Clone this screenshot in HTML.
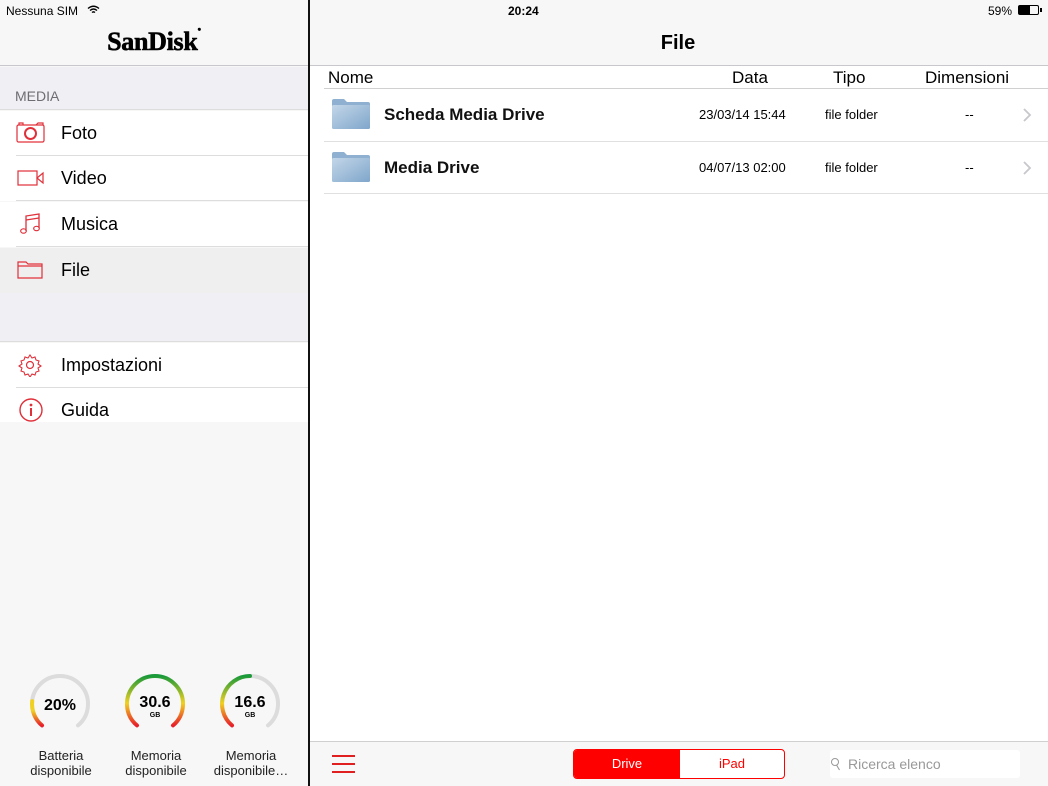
<!DOCTYPE html>
<html><head><meta charset="utf-8"><style>
*{margin:0;padding:0;box-sizing:border-box}
body{width:1048px;height:786px;overflow:hidden;font-family:"Liberation Sans",sans-serif;background:#fff;position:relative;color:#000}
.a{position:absolute}
.side{left:0;top:0;width:308px;height:786px;background:#f7f7f7}
.vline{left:308px;top:0;width:2px;height:786px;background:#111}
.row{position:absolute;left:0;width:308px;height:45px;background:#fff;font-size:18px}
.row span{position:absolute;left:61px;top:12px}
.row .sep{position:absolute;left:16px;right:0;bottom:0;height:1px;background:#ddd}
.row svg{position:absolute;left:16px;top:10px}
.t{font-size:13px;text-align:center;line-height:15px;color:#222}
</style></head><body>
<div class="a side"></div>
<div class="a" style="left:0;top:0;width:308px;height:66px;background:#f7f7f7;border-bottom:1px solid #c8c8cc"></div>
<div class="a" style="left:6px;top:4px;font-size:12px">Nessuna SIM</div>
<svg class="a" style="left:87px;top:5px" width="13" height="10" viewBox="0 0 13 10"><path d="M1 3.5Q6.5-1 12 3.5M3 5.5Q6.5 2.5 10 5.5M5 7.5Q6.5 6.2 8 7.5" stroke="#000" stroke-width="1.4" fill="none"/></svg>
<div class="a" style="left:0;width:308px;top:27px;text-align:center;font-family:'Liberation Serif',serif;font-weight:bold;font-size:26px;letter-spacing:-0.3px;-webkit-text-stroke:0.6px #000">SanDisk<span style="font-size:6px;vertical-align:top">●</span></div>
<div class="a" style="left:0;top:67px;width:308px;height:43px;background:#efeff4;border-bottom:1px solid #ddd"></div>
<div class="a" style="left:15px;top:88px;font-size:14px;color:#6d6d72">MEDIA</div>
<div class="row" style="top:111px"><svg width="30" height="24" viewBox="0 0 30 24"><rect x="1" y="4" width="27" height="17" rx="1.5" fill="none" stroke="#e0303a" stroke-width="1.2"/><path d="M3 4V2h4v2M20 4l2-2h5v2" fill="none" stroke="#e0303a" stroke-width="1.2"/><circle cx="14.5" cy="12.5" r="5.5" fill="none" stroke="#e0303a" stroke-width="2"/></svg><span>Foto</span><div class="sep"></div></div>
<div class="row" style="top:156px"><svg width="30" height="24" viewBox="0 0 30 24"><rect x="2" y="5" width="19" height="14" fill="none" stroke="#e0303a" stroke-width="1.2"/><path d="M21 12l6-5v10z" fill="none" stroke="#e0303a" stroke-width="1.2"/></svg><span>Video</span><div class="sep"></div></div>
<div class="row" style="top:202px"><svg width="30" height="24" viewBox="0 0 30 24"><path d="M10 19V4l13-2v14" fill="none" stroke="#e0303a" stroke-width="1.3"/><path d="M10 8l13-2" stroke="#e0303a" stroke-width="1.3"/><ellipse cx="7.5" cy="19" rx="2.8" ry="2.2" fill="none" stroke="#e0303a" stroke-width="1.2"/><ellipse cx="20.5" cy="16.5" rx="2.8" ry="2.2" fill="none" stroke="#e0303a" stroke-width="1.2"/></svg><span>Musica</span><div class="sep"></div></div>
<div class="row" style="top:248px;background:#efefef"><svg width="30" height="24" viewBox="0 0 30 24"><path d="M2 4h8l2 2h14v14H2z M2 8h24" fill="none" stroke="#e0303a" stroke-width="1.2"/></svg><span>File</span></div>
<div class="a" style="left:0;top:293px;width:308px;height:49px;background:#efeff4;border-bottom:1px solid #ddd"></div>
<div class="row" style="top:343px"><svg width="30" height="24" viewBox="0 0 30 24"><circle cx="14" cy="12" r="3.5" fill="none" stroke="#e0303a" stroke-width="1.2"/><path d="M14 2l2 3 3-1 1 3 3 1-1 3 3 2-3 2 1 3-3 1-1 3-3-1-2 3-2-3-3 1-1-3-3-1 1-3-3-2 3-2-1-3 3-1 1-3 3 1z" fill="none" stroke="#e0303a" stroke-width="1.1"/></svg><span>Impostazioni</span><div class="sep"></div></div>
<div class="row" style="top:388px;height:34px"><svg width="30" height="24" viewBox="0 0 30 24"><circle cx="15" cy="12" r="11" fill="none" stroke="#e0303a" stroke-width="1.4"/><circle cx="15" cy="7" r="1.4" fill="#e0303a"/><path d="M15 10v8" stroke="#e0303a" stroke-width="2"/></svg><span>Guida</span></div>

<svg class="a" style="left:0;top:660px" width="308" height="90">
<defs><linearGradient id="g" x1="0" y1="1" x2="0" y2="0"><stop offset="0" stop-color="#e8202a"/><stop offset="0.45" stop-color="#f0d020"/><stop offset="1" stop-color="#1a9a3a"/></linearGradient>
<linearGradient id="g2" x1="0" y1="1" x2="0" y2="0"><stop offset="0" stop-color="#e8202a"/><stop offset="0.6" stop-color="#f0d020"/><stop offset="1" stop-color="#f0d020"/></linearGradient></defs>
<g fill="none" stroke-width="4" stroke-linecap="round">
<path d="M42 65.4A28 28 0 1 1 78 65.4" stroke="#dcdcdc"/>
<path d="M42 65.4A28 28 0 0 1 32.2 41.1" stroke="url(#g2)"/>
<path d="M137 65.4A28 28 0 1 1 173 65.4" stroke="url(#g)"/>
<path d="M232 65.4A28 28 0 1 1 268 65.4" stroke="#dcdcdc"/>
<path d="M232 65.4A28 28 0 0 1 250 16" stroke="url(#g)"/>
</g>
<text x="60" y="50" font-size="16" font-weight="bold" text-anchor="middle" font-family="Liberation Sans">20%</text>
<text x="155" y="47" font-size="16" font-weight="bold" text-anchor="middle" font-family="Liberation Sans">30.6</text>
<text x="155" y="57" font-size="7" font-weight="bold" text-anchor="middle" font-family="Liberation Sans">GB</text>
<text x="250" y="47" font-size="16" font-weight="bold" text-anchor="middle" font-family="Liberation Sans">16.6</text>
<text x="250" y="57" font-size="7" font-weight="bold" text-anchor="middle" font-family="Liberation Sans">GB</text>
</svg>
<div class="a t" style="left:20px;width:82px;top:748px">Batteria<br>disponibile</div>
<div class="a t" style="left:115px;width:82px;top:748px">Memoria<br>disponibile</div>
<div class="a t" style="left:205px;width:92px;top:748px">Memoria<br>disponibile…</div>
<div class="a vline"></div>

<div class="a" style="left:310px;top:0;width:738px;height:66px;background:#f7f7f7;border-bottom:1px solid #c8c8cc"></div>
<div class="a" style="left:508px;top:4px;font-size:12px;font-weight:bold">20:24</div>
<div class="a" style="left:988px;top:4px;font-size:12px">59%</div>
<div class="a" style="left:1018px;top:5px;width:21px;height:10px;border:1px solid #000;border-radius:2px"><div style="width:11px;height:8px;background:#000"></div></div>
<div class="a" style="left:1040px;top:8px;width:2px;height:4px;background:#000"></div>
<div class="a" style="left:310px;width:736px;top:32px;text-align:center;font-size:20px;font-weight:bold">File</div>
<div class="a" style="left:328px;top:68px;font-size:17px">Nome</div>
<div class="a" style="left:732px;top:68px;font-size:17px">Data</div>
<div class="a" style="left:833px;top:68px;font-size:17px">Tipo</div>
<div class="a" style="left:925px;top:68px;font-size:17px">Dimensioni</div>
<div class="a" style="left:324px;top:88px;width:724px;height:1px;background:#d0d0d0"></div>
<div class="a" style="left:324px;top:141px;width:724px;height:1px;background:#e0e0e0"></div>
<div class="a" style="left:324px;top:193px;width:724px;height:1px;background:#e0e0e0"></div>

<svg class="a" style="left:331px;top:98px" width="40" height="32" viewBox="0 0 40 32"><defs><linearGradient id="f" x1="0" y1="0" x2="1" y2="1"><stop offset="0" stop-color="#c3d6e8"/><stop offset="1" stop-color="#7fa6cb"/></linearGradient></defs><path d="M1 3q0-2 2-2h10l3 3h21q2 0 2 2v4H1z" fill="#8fb0d0"/><rect x="1" y="7" width="38" height="24" rx="1.5" fill="url(#f)"/></svg>
<svg class="a" style="left:331px;top:151px" width="40" height="32" viewBox="0 0 40 32"><path d="M1 3q0-2 2-2h10l3 3h21q2 0 2 2v4H1z" fill="#8fb0d0"/><rect x="1" y="7" width="38" height="24" rx="1.5" fill="url(#f)"/></svg>
<div class="a" style="left:384px;top:105px;font-size:17px;font-weight:bold;color:#111">Scheda Media Drive</div>
<div class="a" style="left:384px;top:158px;font-size:17px;font-weight:bold;color:#111">Media Drive</div>
<div class="a" style="left:699px;top:107px;font-size:13px">23/03/14 15:44</div>
<div class="a" style="left:699px;top:160px;font-size:13px">04/07/13 02:00</div>
<div class="a" style="left:825px;top:107px;font-size:13px">file folder</div>
<div class="a" style="left:825px;top:160px;font-size:13px">file folder</div>
<div class="a" style="left:965px;top:107px;font-size:13px">--</div>
<div class="a" style="left:965px;top:160px;font-size:13px">--</div>
<svg class="a" style="left:1022px;top:108px" width="10" height="14"><path d="M2 1l6 6-6 6" fill="none" stroke="#c7c7cc" stroke-width="1.8"/></svg>
<svg class="a" style="left:1022px;top:161px" width="10" height="14"><path d="M2 1l6 6-6 6" fill="none" stroke="#c7c7cc" stroke-width="1.8"/></svg>

<div class="a" style="left:310px;top:741px;width:738px;height:45px;background:#f7f7f7;border-top:1px solid #d0d0d0"></div>
<div class="a" style="left:332px;top:755px;width:23px;height:2px;background:#e02020"></div>
<div class="a" style="left:332px;top:763px;width:23px;height:2px;background:#e02020"></div>
<div class="a" style="left:332px;top:771px;width:23px;height:2px;background:#e02020"></div>
<div class="a" style="left:573px;top:749px;width:212px;height:30px;border:1px solid #f00;border-radius:4px;background:#fff;overflow:hidden;font-size:13px">
<div style="position:absolute;left:0;top:0;width:106px;height:28px;background:#f00;color:#fff;text-align:center;line-height:28px">Drive</div>
<div style="position:absolute;left:106px;top:0;width:104px;height:28px;color:#f00;text-align:center;line-height:28px">iPad</div></div>
<div class="a" style="left:830px;top:750px;width:190px;height:28px;background:#fff;border-radius:3px"></div>
<svg class="a" style="left:830px;top:757px" width="12" height="14" viewBox="0 0 12 14"><circle cx="5" cy="5" r="3.5" fill="none" stroke="#999" stroke-width="1"/><path d="M6.5 8l3 5" stroke="#999" stroke-width="1.1"/></svg>
<div class="a" style="left:848px;top:756px;font-size:14px;color:#999">Ricerca elenco</div>
</body></html>
